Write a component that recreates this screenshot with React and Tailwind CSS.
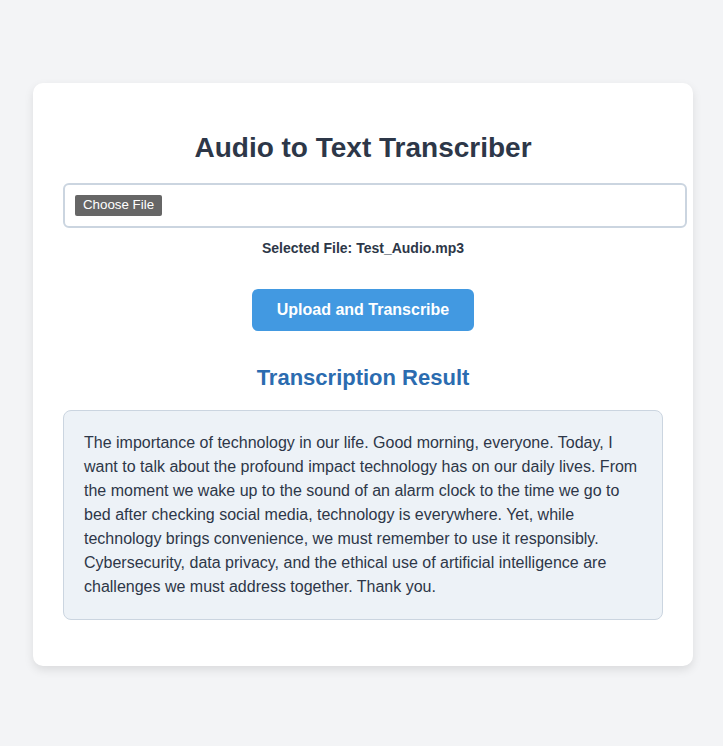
export default function App() {
  return (
    <div className="min-h-[746px] bg-[#f3f4f6] pt-[83px] font-['Liberation_Sans',Arial,sans-serif]">
      <div className="ml-[33px] w-[660px] rounded-[10px] bg-white p-[30px] pb-[46px] shadow-[0_4px_10px_rgba(0,0,0,0.1)]">
        <h1 className="my-[18.76px] text-center text-[28px] font-bold leading-[32px] text-[#2d3748]">
          Audio to Text Transcriber
        </h1>
        <div className="flex h-[45px] w-[624px] items-center rounded-[6px] border-2 border-[#cbd5e0] bg-white px-[10px]">
          <span className="flex h-[21px] w-[87px] items-center justify-center rounded-[2px] bg-[#666666] text-[13.33px] text-white">
            Choose File
          </span>
        </div>
        <p className="mt-[12px] text-center text-[14px] font-bold leading-[16px] text-[#2d3748]">
          Selected File: Test_Audio.mp3
        </p>
        <div className="mt-[33px] flex justify-center">
          <button className="h-[42px] w-[222px] rounded-[6px] bg-[#4299e1] text-[16px] font-bold text-white">
            Upload and Transcribe
          </button>
        </div>
        <h2 className="mt-[34px] text-center text-[22px] font-bold leading-[26px] text-[#2b6cb0]">
          Transcription Result
        </h2>
        <div className="mt-[19px] rounded-[8px] border border-[#cbd5e0] bg-[#edf2f7] p-[20px] text-[16px] leading-[24px] text-[#2d3748]">
          The importance of technology in our life. Good morning, everyone. Today, I want to talk about the profound impact technology has on our daily lives. From the moment we wake up to the sound of an alarm clock to the time we go to bed after checking social media, technology is everywhere. Yet, while technology brings convenience, we must remember to use it responsibly. Cybersecurity, data privacy, and the ethical use of artificial intelligence are challenges we must address together. Thank you.
        </div>
      </div>
    </div>
  );
}
